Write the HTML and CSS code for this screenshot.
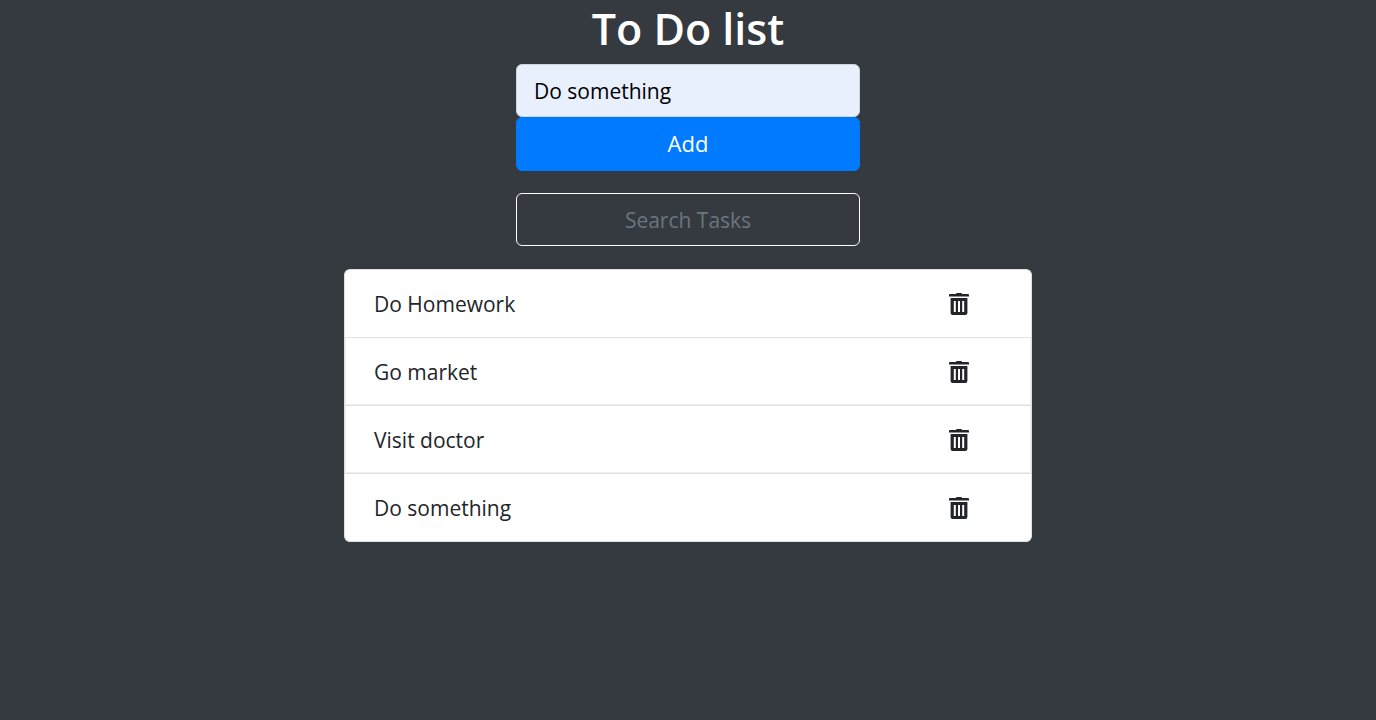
FILE: index.html
```html
<!DOCTYPE html>
<html lang="en">
<head>
<meta charset="utf-8">
<meta name="viewport" content="width=device-width, initial-scale=1">
<title>To Do list</title>
<link rel="stylesheet" href="styles.css">
</head>
<body>
<svg class="sprite" aria-hidden="true">
  <symbol id="trash" viewBox="0 0 20 22">
    <path fill-rule="evenodd" d="M7 1 Q7 0 8 0 H12 Q13 0 13 1 H19 Q20 1 20 2 V3.6 H0 V2 Q0 1 1 1 Z M1.6 5 H18.4 V20 Q18.4 22 16.4 22 H3.6 Q1.6 22 1.6 20 Z M4.8 8 V19 H6.8 V8 Z M9 8 V19 H11 V8 Z M13.2 8 V19 H15.2 V8 Z"/>
  </symbol>
</svg>
<main class="page">
  <h1 class="title">To Do list</h1>
  <form class="add-form">
    <input class="field field-filled" type="text" value="Do something" aria-label="New task">
    <button class="add-button" type="button">Add</button>
  </form>
  <input class="field field-search" type="text" placeholder="Search Tasks" aria-label="Search Tasks">
  <ul class="tasks">
    <li class="task"><span>Do Homework</span><button class="delete" type="button" aria-label="Delete Do Homework"><svg class="icon"><use href="#trash"/></svg></button></li>
    <li class="task"><span>Go market</span><button class="delete" type="button" aria-label="Delete Go market"><svg class="icon"><use href="#trash"/></svg></button></li>
    <li class="task"><span>Visit doctor</span><button class="delete" type="button" aria-label="Delete Visit doctor"><svg class="icon"><use href="#trash"/></svg></button></li>
    <li class="task"><span>Do something</span><button class="delete" type="button" aria-label="Delete Do something"><svg class="icon"><use href="#trash"/></svg></button></li>
  </ul>
</main>
</body>
</html>
```
FILE: styles.css
```css
* { box-sizing: border-box; }
body {
  margin: 0;
  background: #343a40;
  color: #212529;
  font-family: "Segoe UI", "Open Sans", "Noto Sans", sans-serif;
  font-size: 21px;
  line-height: 34px;
}
.sprite { display: none; }
.page {
  display: flex;
  flex-direction: column;
  align-items: center;
}
.title {
  margin: 0 0 6px;
  color: #fff;
  font-size: 43px;
  font-weight: 600;
  line-height: 58px;
}
.add-form {
  display: flex;
  flex-direction: column;
  width: 25%;
}
.field, .add-button {
  width: 100%;
  border: 1px solid #ced4da;
  border-radius: 6px;
  font: inherit;
}
.field { height: 53px; padding: 8px 17px; }
.field-filled { background: #e8f0fe; color: #000; }
.add-button {
  padding: 8px 17px 10px;
  border-color: #007bff;
  background: #007bff;
  color: #fff;
  font-size: 22px;
}
.field-search {
  width: 25%;
  margin: 22px 0 23px;
  border-color: #fff;
  background: transparent;
  color: #fff;
  text-align: center;
}
.field-search::placeholder { color: #6c757d; opacity: 1; }
.tasks {
  width: 50%;
  margin: 0;
  padding: 0;
  list-style: none;
  border: 1px solid #dfdfdf;
  border-bottom: 0;
  border-radius: 6px;
  background: #fff;
}
.task {
  display: flex;
  align-items: center;
  justify-content: space-between;
  padding: 17px 62px 16px 29px;
  border-bottom: 1px solid #dfdfdf;
}
.task:nth-child(2), .task:nth-child(3) {
  box-shadow: inset 1px 0 #efefef, inset -1px -1px #efefef;
}
.task:last-child { border-radius: 0 0 6px 6px; }
.delete {
  display: flex;
  padding: 0;
  border: 0;
  background: none;
  color: inherit;
}
.icon { width: 20px; height: 22px; fill: currentColor; }
```
